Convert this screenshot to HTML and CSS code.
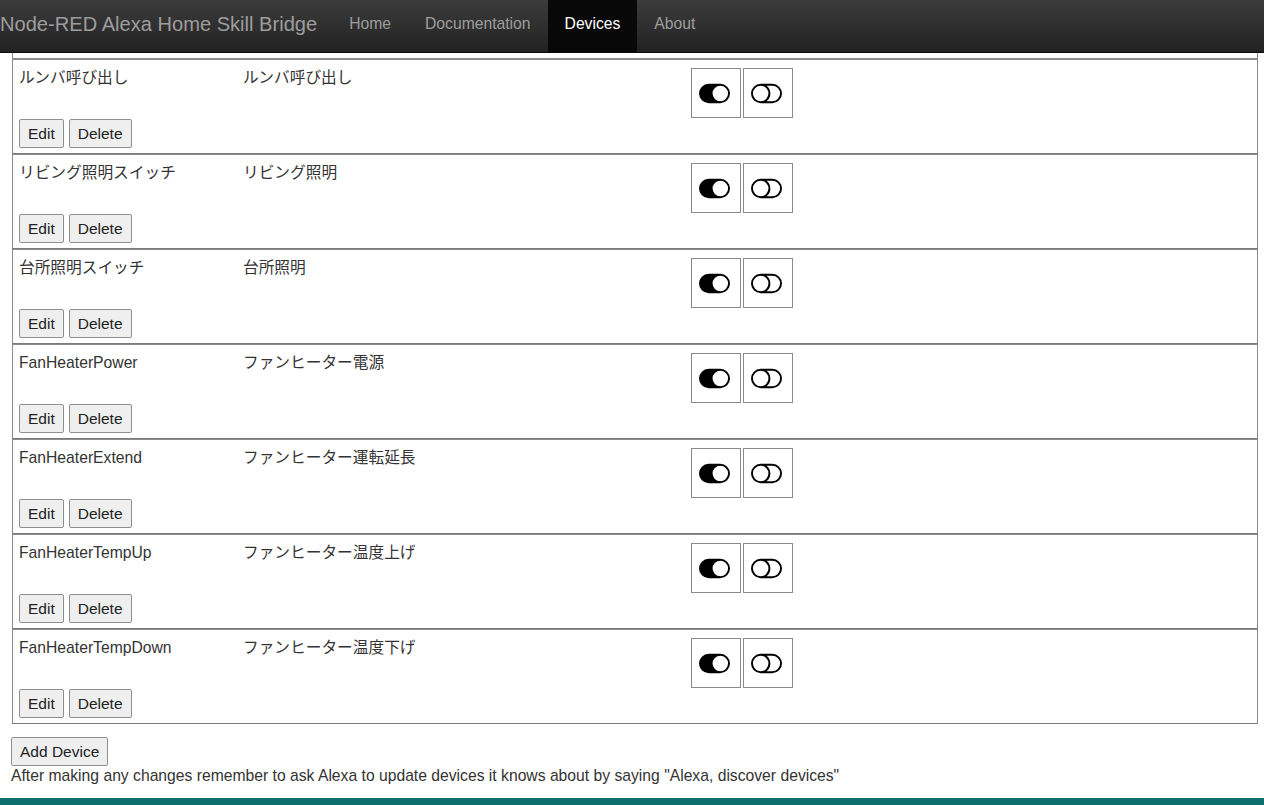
FILE: index.html
```html
<!DOCTYPE html>
<html lang="ja">
<head>
<meta charset="utf-8">
<title>Devices - Node-RED Alexa Home Skill Bridge</title>
<link rel="stylesheet" href="styles.css">
</head>
<body>
<nav class="navbar">
  <span class="brand">Node-RED Alexa Home Skill Bridge</span>
  <a class="nav-link">Home</a>
  <a class="nav-link">Documentation</a>
  <a class="nav-link active">Devices</a>
  <a class="nav-link">About</a>
</nav>
<main class="content">
  <div class="row-tail"></div>

  <div class="device">
    <div class="col-name">
      <div class="name">ルンバ呼び出し</div>
      <div class="actions"><button class="btn">Edit</button><button class="btn">Delete</button></div>
    </div>
    <div class="col-desc">ルンバ呼び出し</div>
    <div class="col-toggle">
      <div class="tbox"><svg class="ticon" viewBox="0 0 16 16"><path d="M5 3a5 5 0 0 0 0 10h6a5 5 0 0 0 0-10H5zm6 9a4 4 0 1 1 0-8 4 4 0 0 1 0 8z"/></svg></div>
      <div class="tbox"><svg class="ticon" viewBox="0 0 16 16"><path d="M11 4a4 4 0 0 1 0 8H8a4.992 4.992 0 0 0 2-4 4.992 4.992 0 0 0-2-4h3zm-6 8a4 4 0 1 1 0-8 4 4 0 0 1 0 8zM0 8a5 5 0 0 0 5 5h6a5 5 0 0 0 0-10H5a5 5 0 0 0-5 5z"/></svg></div>
    </div>
  </div>

  <div class="device">
    <div class="col-name">
      <div class="name">リビング照明スイッチ</div>
      <div class="actions"><button class="btn">Edit</button><button class="btn">Delete</button></div>
    </div>
    <div class="col-desc">リビング照明</div>
    <div class="col-toggle">
      <div class="tbox"><svg class="ticon" viewBox="0 0 16 16"><path d="M5 3a5 5 0 0 0 0 10h6a5 5 0 0 0 0-10H5zm6 9a4 4 0 1 1 0-8 4 4 0 0 1 0 8z"/></svg></div>
      <div class="tbox"><svg class="ticon" viewBox="0 0 16 16"><path d="M11 4a4 4 0 0 1 0 8H8a4.992 4.992 0 0 0 2-4 4.992 4.992 0 0 0-2-4h3zm-6 8a4 4 0 1 1 0-8 4 4 0 0 1 0 8zM0 8a5 5 0 0 0 5 5h6a5 5 0 0 0 0-10H5a5 5 0 0 0-5 5z"/></svg></div>
    </div>
  </div>

  <div class="device">
    <div class="col-name">
      <div class="name">台所照明スイッチ</div>
      <div class="actions"><button class="btn">Edit</button><button class="btn">Delete</button></div>
    </div>
    <div class="col-desc">台所照明</div>
    <div class="col-toggle">
      <div class="tbox"><svg class="ticon" viewBox="0 0 16 16"><path d="M5 3a5 5 0 0 0 0 10h6a5 5 0 0 0 0-10H5zm6 9a4 4 0 1 1 0-8 4 4 0 0 1 0 8z"/></svg></div>
      <div class="tbox"><svg class="ticon" viewBox="0 0 16 16"><path d="M11 4a4 4 0 0 1 0 8H8a4.992 4.992 0 0 0 2-4 4.992 4.992 0 0 0-2-4h3zm-6 8a4 4 0 1 1 0-8 4 4 0 0 1 0 8zM0 8a5 5 0 0 0 5 5h6a5 5 0 0 0 0-10H5a5 5 0 0 0-5 5z"/></svg></div>
    </div>
  </div>

  <div class="device">
    <div class="col-name">
      <div class="name">FanHeaterPower</div>
      <div class="actions"><button class="btn">Edit</button><button class="btn">Delete</button></div>
    </div>
    <div class="col-desc">ファンヒーター電源</div>
    <div class="col-toggle">
      <div class="tbox"><svg class="ticon" viewBox="0 0 16 16"><path d="M5 3a5 5 0 0 0 0 10h6a5 5 0 0 0 0-10H5zm6 9a4 4 0 1 1 0-8 4 4 0 0 1 0 8z"/></svg></div>
      <div class="tbox"><svg class="ticon" viewBox="0 0 16 16"><path d="M11 4a4 4 0 0 1 0 8H8a4.992 4.992 0 0 0 2-4 4.992 4.992 0 0 0-2-4h3zm-6 8a4 4 0 1 1 0-8 4 4 0 0 1 0 8zM0 8a5 5 0 0 0 5 5h6a5 5 0 0 0 0-10H5a5 5 0 0 0-5 5z"/></svg></div>
    </div>
  </div>

  <div class="device">
    <div class="col-name">
      <div class="name">FanHeaterExtend</div>
      <div class="actions"><button class="btn">Edit</button><button class="btn">Delete</button></div>
    </div>
    <div class="col-desc">ファンヒーター運転延長</div>
    <div class="col-toggle">
      <div class="tbox"><svg class="ticon" viewBox="0 0 16 16"><path d="M5 3a5 5 0 0 0 0 10h6a5 5 0 0 0 0-10H5zm6 9a4 4 0 1 1 0-8 4 4 0 0 1 0 8z"/></svg></div>
      <div class="tbox"><svg class="ticon" viewBox="0 0 16 16"><path d="M11 4a4 4 0 0 1 0 8H8a4.992 4.992 0 0 0 2-4 4.992 4.992 0 0 0-2-4h3zm-6 8a4 4 0 1 1 0-8 4 4 0 0 1 0 8zM0 8a5 5 0 0 0 5 5h6a5 5 0 0 0 0-10H5a5 5 0 0 0-5 5z"/></svg></div>
    </div>
  </div>

  <div class="device">
    <div class="col-name">
      <div class="name">FanHeaterTempUp</div>
      <div class="actions"><button class="btn">Edit</button><button class="btn">Delete</button></div>
    </div>
    <div class="col-desc">ファンヒーター温度上げ</div>
    <div class="col-toggle">
      <div class="tbox"><svg class="ticon" viewBox="0 0 16 16"><path d="M5 3a5 5 0 0 0 0 10h6a5 5 0 0 0 0-10H5zm6 9a4 4 0 1 1 0-8 4 4 0 0 1 0 8z"/></svg></div>
      <div class="tbox"><svg class="ticon" viewBox="0 0 16 16"><path d="M11 4a4 4 0 0 1 0 8H8a4.992 4.992 0 0 0 2-4 4.992 4.992 0 0 0-2-4h3zm-6 8a4 4 0 1 1 0-8 4 4 0 0 1 0 8zM0 8a5 5 0 0 0 5 5h6a5 5 0 0 0 0-10H5a5 5 0 0 0-5 5z"/></svg></div>
    </div>
  </div>

  <div class="device">
    <div class="col-name">
      <div class="name">FanHeaterTempDown</div>
      <div class="actions"><button class="btn">Edit</button><button class="btn">Delete</button></div>
    </div>
    <div class="col-desc">ファンヒーター温度下げ</div>
    <div class="col-toggle">
      <div class="tbox"><svg class="ticon" viewBox="0 0 16 16"><path d="M5 3a5 5 0 0 0 0 10h6a5 5 0 0 0 0-10H5zm6 9a4 4 0 1 1 0-8 4 4 0 0 1 0 8z"/></svg></div>
      <div class="tbox"><svg class="ticon" viewBox="0 0 16 16"><path d="M11 4a4 4 0 0 1 0 8H8a4.992 4.992 0 0 0 2-4 4.992 4.992 0 0 0-2-4h3zm-6 8a4 4 0 1 1 0-8 4 4 0 0 1 0 8zM0 8a5 5 0 0 0 5 5h6a5 5 0 0 0 0-10H5a5 5 0 0 0-5 5z"/></svg></div>
    </div>
  </div>

  <div class="bottom">
    <button class="btn btn-add">Add Device</button>
    <p class="note">After making any changes remember to ask Alexa to update devices it knows about by saying "Alexa, discover devices"</p>
  </div>
</main>
<footer class="footer"></footer>
</body>
</html>
```

FILE: styles.css
```css
html, body {
  margin: 0;
  padding: 0;
}
body {
  font-family: "Liberation Sans", Arial, "Noto Sans CJK JP", sans-serif;
  font-size: 15.7px;
  color: #333;
  background: #fff;
  height: 805px;
  overflow: hidden;
  display: flex;
  flex-direction: column;
}
.navbar {
  display: flex;
  align-items: stretch;
  height: 53px;
  background: linear-gradient(to bottom, #3c3c3c 0%, #222 100%);
  border-bottom: 1px solid #080808;
  box-sizing: border-box;
}
.brand {
  font-size: 20.1px;
  line-height: 48px;
  color: #9d9d9d;
  padding: 0 15px 0 0;
}
.nav-link {
  font-size: 15.7px;
  line-height: 48px;
  color: #9d9d9d;
  padding: 0 17px;
}
.nav-link.active {
  color: #fff;
  background: #080808;
}
.content {
  flex: 1;
  padding: 0 6px 0 11px;
}
.row-tail {
  height: 6px;
  margin-left: 1px;
  border: 1px solid #8c8c8c;
  border-top: none;
  box-sizing: border-box;
}
.device {
  margin-left: 1px;
  height: 95px;
  box-sizing: border-box;
  border: 1px solid #8c8c8c;
  border-bottom-color: #7a7a7a;
  padding: 8px 6px 0 6px;
  display: grid;
  grid-template-columns: 224px 448px 1fr;
}
.name, .col-desc {
  line-height: 20px;
}
.actions {
  display: flex;
  gap: 5px;
  margin-top: 31px;
}
.btn {
  font-family: "Liberation Sans", Arial, sans-serif;
  font-size: 15.5px;
  color: #222;
  height: 29px;
  padding: 0 8px;
  background: #efefef;
  border: 1px solid #8f8f8f;
  border-radius: 2px;
  box-sizing: border-box;
}
.col-toggle {
  display: flex;
  gap: 2px;
  align-items: flex-start;
}
.tbox {
  width: 50px;
  height: 50px;
  box-sizing: border-box;
  border: 1px solid #8a8a8a;
  display: flex;
  align-items: center;
  justify-content: center;
}
.ticon {
  width: 31px;
  height: 31px;
  fill: #000;
  margin-right: 3px;
}
.bottom {
  padding-top: 13px;
}
.note {
  margin: 0;
  line-height: 20px;
}
.footer {
  height: 7px;
  background: #0e6e6e;
  flex: none;
}
```
